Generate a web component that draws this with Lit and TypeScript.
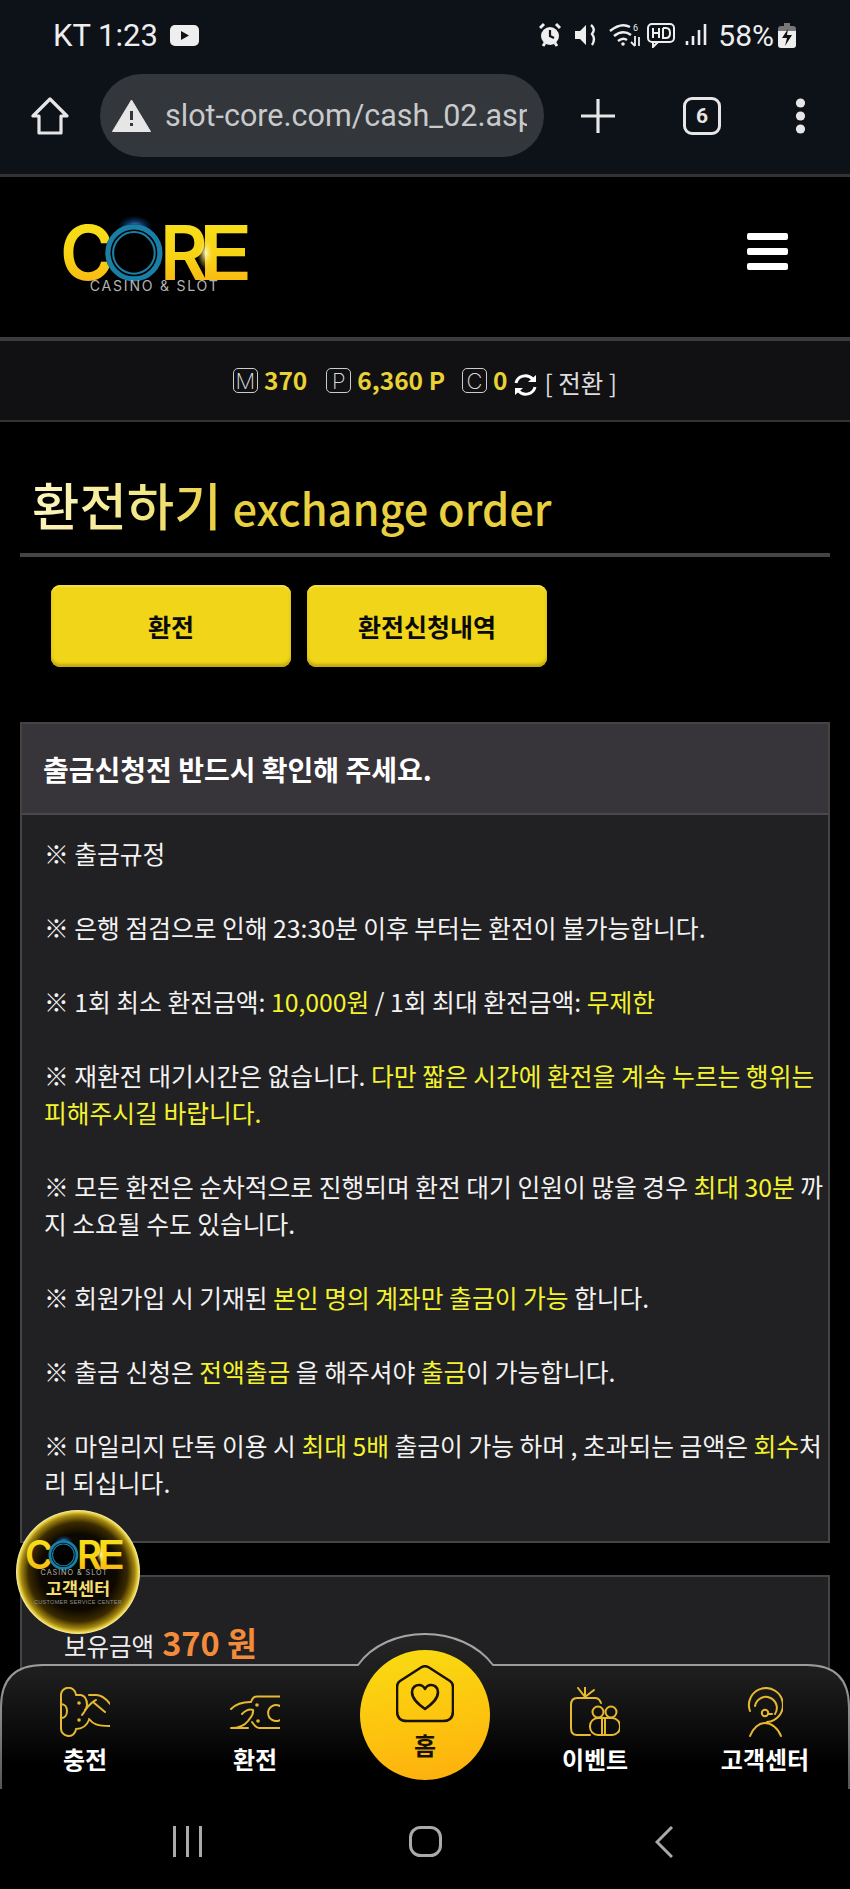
import { LitElement, html, css, svg } from "lit";
import { customElement } from "lit/decorators.js";

const logo = (id: string, w: number) => html`<svg class="logo" width=${w} viewBox="0 -14 196 100">
  <defs>
    <linearGradient id="${id}g" x1="0" y1="0" x2="0" y2="1"><stop offset="0" stop-color="#f7e51c"/><stop offset=".55" stop-color="#f7d214"/><stop offset="1" stop-color="#fba913"/></linearGradient>
    <radialGradient id="${id}b"><stop offset="0" stop-color="#5aa8f5"/><stop offset=".5" stop-color="#124a88" stop-opacity=".7"/><stop offset="1" stop-color="#0a2a55" stop-opacity="0"/></radialGradient>
    <radialGradient id="${id}w"><stop offset="0" stop-color="#fff8c0"/><stop offset="1" stop-color="#f7d214" stop-opacity="0"/></radialGradient>
  </defs>
  <ellipse cx="72" cy="7" rx="17" ry="11" fill="url(#${id}b)"/>
  <text class="lg" x="0" y="58" font-size="72" textLength="52" lengthAdjust="spacingAndGlyphs" fill="url(#${id}g)">C</text>
  <text class="lg" x="96" y="58" font-size="72" textLength="46" lengthAdjust="spacingAndGlyphs" fill="url(#${id}g)">R</text>
  <text class="lg" x="133" y="58" font-size="72" textLength="52" lengthAdjust="spacingAndGlyphs" fill="url(#${id}g)">E</text>
  <circle cx="71" cy="32" r="27.5" fill="#000"/>
  <circle cx="71" cy="32" r="25" fill="none" stroke="#1a7fa6" stroke-width="5"/>
  <circle cx="71" cy="32" r="20" fill="none" stroke="#1a7fa6" stroke-width="2"/>
  <ellipse cx="140" cy="32" rx="8" ry="16" fill="url(#${id}w)"/>
  <text class="ls" x="91" y="69" text-anchor="middle" font-size="13.5" letter-spacing="1.7" fill="#b4b4b4">CASINO &amp; SLOT</text>
</svg>`;

const navIcons: Record<string, unknown> = {
  charge: html`<svg width="50" height="50" viewBox="0 0 50 50" class="ni">
    <path d="M1 9A7.5 7.5 0 0 1 16 7.5M1 9V41A7.5 7.5 0 0 0 16 42M16 8H21C26 9 27 13 27 18C27 23 24 25 22 28M16 42C23 42 27 38 29 33"/>
    <path d="M1 17C9 17 9 31 1 31M29 8H36C42 8 47 13 50 17M25 23C30 17 33 14 36 13M33 15L45 25M29 32C33 37 37 39 50 39"/>
    <circle class="d" cx="19" cy="16" r="1.8"/><circle class="d" cx="19" cy="33" r="1.8"/></svg>`,
  exchange: html`<svg width="50" height="50" viewBox="0 -8 50 50" class="ni">
    <path d="M50 1.5H27C24 1.5 22 4 21 7M1 14C6 9 11 7 20 7M12 19C16 15 20 14 23 15C24 20 20 23 18 26C15 30 10 33 1 33H18M50 33H29C26 33 24 30 22 27M50 11A8 8 0 1 0 50 25"/>
    <circle class="d" cx="27" cy="10" r="1.8"/><circle class="d" cx="28" cy="26" r="1.8"/></svg>`,
  event: html`<svg width="50" height="50" viewBox="0 0 50 50" class="ni">
    <path d="M15 10L8 1M15 10V0M15 10L24 3M31 16C30 13 28 11 25 11H7C3 11 1 14 1 18V41C1 45 3 48 7 48H20"/>
    <rect x="20" y="31" width="30" height="17" rx="8"/><path d="M32 31V48M35 31V48"/>
    <circle cx="28" cy="25" r="5.5"/><circle cx="41" cy="25" r="5.5"/></svg>`,
  support: html`<svg width="36" height="50" viewBox="0 0 36 50" class="ni">
    <path d="M3 24A17 17 0 1 1 20 35M8 19A11 11 0 1 1 28 27"/>
    <circle cx="18" cy="26" r="3.2"/><path d="M21 27H25M3 49C6 41 12 36 18 36C24 36 31 41 34 49"/></svg>`,
};

const navLeft = [{ i: "charge", l: "충전" }, { i: "exchange", l: "환전" }];
const navRight = [{ i: "event", l: "이벤트" }, { i: "support", l: "고객센터" }];

@customElement("app-root")
export class AppRoot extends LitElement {
  static styles = css`
    :host { display: block; width: 850px; height: 1889px; background: #000; position: relative; overflow: hidden; font-family: "Noto Sans CJK KR", "Noto Sans", sans-serif; color: #fff; }
    .page { display: flex; flex-direction: column; height: 1889px; }
    svg { display: block; flex: none; }
    .lg { font-family: Inter, sans-serif; font-weight: 600; }
    .ls { font-family: Inter, sans-serif; font-weight: 400; }
    .chrome { background: #0d1118; height: 174px; border-bottom: 3px solid #333; font-family: Roboto, sans-serif; flex: none; }
    .status { height: 74px; padding: 0 0 4px 53px; box-sizing: border-box; display: flex; align-items: center; font-size: 31px; color: #eee; }
    .yt { margin-left: 12px; }
    .st-right { margin-left: auto; display: flex; align-items: center; padding-right: 54px; }
    .tiny { font-size: 9px; font-family: Roboto, sans-serif; fill: #eee; stroke: none; }
    .pct { margin: 0 4px 0 9px; font-size: 30px; }
    .toolbar { display: flex; align-items: center; height: 83px; padding-left: 31px; }
    .url { margin-left: 31px; width: 444px; height: 83px; border-radius: 42px; background: #33363b; display: flex; align-items: center; padding: 0 16px 0 12px; box-sizing: border-box; }
    .url-text { margin-left: 14px; width: 362px; overflow: hidden; white-space: nowrap; font-size: 30.5px; color: #c8cacc; }
    .plus { margin-left: 37px; }
    .tab { margin-left: 68px; width: 38px; height: 38px; box-sizing: border-box; border: 3px solid #e6e6e6; border-radius: 9px; display: flex; align-items: center; justify-content: center; font-size: 21px; font-weight: 700; color: #e6e6e6; }
    .dots { margin-left: 74px; }
    .header { height: 164px; box-sizing: border-box; background: #000; display: flex; align-items: center; padding: 0 62px 0 60px; justify-content: space-between; border-bottom: 4px solid #3c3c3c; flex: none; }
    .logo-wrap { margin-top: 1px; }
    .burger { display: flex; flex-direction: column; gap: 8px; margin-top: -11px; }
    .burger i { display: block; width: 41px; height: 7px; border-radius: 2px; background: #fff; }
    .points { height: 79px; background: #111114; border-bottom: 2px solid #333; display: flex; align-items: center; justify-content: center; flex: none; box-sizing: content-box; }
    .pi { width: 25px; height: 25px; box-sizing: border-box; border: 1.5px solid #ccc; border-radius: 5px; display: flex; align-items: center; justify-content: center; font-family: Inter, sans-serif; font-weight: 200; font-size: 22px; color: #ddd; }
    .pv { margin-left: 6px; font-size: 24.5px; font-weight: 700; color: #e9d233; line-height: 1; }
    .pg { margin-left: 19px; }
    .pc { margin-left: 17px; }
    .swap { margin-left: 7px; margin-top: 8px; }
    .sw-t { margin-left: 7px; font-size: 24.5px; color: #ddd; margin-top: 6px; line-height: 1; }
    .title { flex: none; margin: 0 20px; padding: 46px 0 0 12px; height: 135px; box-sizing: border-box; border-bottom: 4px solid #444; display: flex; align-items: baseline; line-height: 72px; }
    .t-ko { font-size: 51.5px; font-weight: 500; background: linear-gradient(100deg, #fff6c4 0%, #f3e88a 55%, #e9cd3a 100%); -webkit-background-clip: text; background-clip: text; color: transparent; }
    .t-en { margin-left: 11px; font-size: 43.3px; font-weight: 500; color: #e8d040; }
    .tabs { flex: none; display: flex; gap: 16px; padding: 28px 0 0 51px; }
    .btn { width: 240px; height: 82px; border-radius: 9px; background: #f0d518; box-shadow: inset 0 -3px 3px #c2a812, inset 0 2px 2px #f6e14a; display: flex; align-items: center; justify-content: center; color: #0a0a0a; font-size: 25px; font-weight: 700; }
    .panel { margin: 55px 20px 0; border: 2px solid #444; background: #212023; flex: none; box-sizing: border-box; }
    .p-head { background: #37343a; border-bottom: 2px solid #4a484c; display: flex; align-items: center; padding-left: 21px; font-size: 28px; font-weight: 700; box-sizing: border-box; height: 91px; }
    .p-body { padding: 20px 2px 3px 22px; font-size: 24.75px; line-height: 37px; color: #f2f2f2; box-sizing: border-box; }
    .p-body p { margin: 0 0 37px; }
    .p-body b { font-weight: 400; color: #f3f32e; }
    .panel2 { margin-top: 32px; flex: 1; min-height: 0; border-bottom: 0; padding: 44px 0 0 42px; display: flex; align-items: baseline; font-size: 24.5px; color: #eee; overflow: hidden; line-height: 42px; }
    .bal { margin-left: 8px; font-size: 32.5px; font-weight: 700; color: #f28c3a; }
    .sys { height: 100px; flex: none; background: #000; display: flex; align-items: flex-start; padding: 37px 0 0 173px; box-sizing: border-box; position: relative; z-index: 3; }
    .sys-h { margin-left: 207px; }
    .sys-b { margin-left: 213px; }
    .nav { position: absolute; left: 0; bottom: 100px; width: 850px; height: 156px; z-index: 2; }
    .nav-bg { position: absolute; inset: 0; }
    .nav-grid { position: relative; display: grid; grid-template-columns: repeat(5, 170px); padding-top: 17px; }
    .item { display: flex; flex-direction: column; align-items: center; padding-top: 37px; font-size: 24px; font-weight: 700; line-height: 30px; }
    .item span { margin-top: 7px; }
    .ni { fill: none; stroke: #e6b92e; stroke-width: 2; stroke-linecap: round; stroke-linejoin: round; }
    .ni .d { fill: #e6b92e; stroke: none; }
    .home { width: 130px; height: 130px; border-radius: 50%; justify-self: center; background: linear-gradient(170deg, #f8dc12 0%, #fdc40e 55%, #fdae0e 100%); display: flex; flex-direction: column; align-items: center; padding-top: 15px; box-sizing: border-box; color: #1a1200; font-size: 24px; font-weight: 700; line-height: 30px; }
    .home span { margin-top: 7px; }
    .badge { position: absolute; left: 16px; top: 1510px; width: 124px; height: 124px; border-radius: 50%; z-index: 1; box-sizing: border-box; background: radial-gradient(circle closest-side, #060400 0%, #0e0900 62%, #3a2a00 80%, #a88a10 92%, #e8d24a 97%, #fbf3b0 100%); display: flex; flex-direction: column; align-items: center; padding-top: 20px; }
    .b-ko { font-size: 17.5px; font-weight: 700; line-height: 20px; margin-top: -6px; color: #f3df72; }
    .b-en { font-size: 5.5px; line-height: 9px; color: #8f8f8f; font-family: "Liberation Sans", sans-serif; letter-spacing: .3px; white-space: nowrap; }
  `;

  render() {
    return html`<div class="page">
      <div class="chrome">
        <div class="status">
          <span>KT 1:23</span>
          <svg class="yt" width="29" height="21" viewBox="0 0 29 21"><rect width="29" height="21" rx="5" fill="#eee"/><path d="M11 6L19 10.5L11 15Z" fill="#111"/></svg>
          <div class="st-right">
            <svg width="170" height="26" viewBox="0 0 170 26" fill="none" stroke="#eee">
              <circle cx="11" cy="14" r="9" fill="#eee" stroke="none"/><path d="M11 8V14L15 16" stroke="#0d1118" stroke-width="2.2"/><path d="M1 6L5 2M21 6L17 2M4 24L6 21M18 24L16 21" stroke-width="3"/>
              <path d="M36 9H41L47 3V23L41 17H36Z" fill="#eee" stroke="none"/><path d="M52 3Q57 7 53 12Q57 17 53 23" stroke-width="2.4"/>
              <path d="M71 9Q82 0 91 5M75 14Q84 7 92 13M79 19Q84 15 88 18" stroke-width="2.4"/><circle cx="84" cy="22" r="1.8" fill="#eee" stroke="none"/><text class="tiny" x="94" y="9">6</text><path d="M96 14V24M92 20L96 24M100 24V15" stroke-width="1.8"/>
              <rect x="109" y="2" width="26" height="18" rx="4" stroke-width="2"/><path d="M114 20V25L119 20" stroke-width="2"/><path d="M114 6V16M114 11H120M120 6V16M124 6V16H127Q131 16 131 11Q131 6 127 6H124" stroke-width="2"/>
              <path d="M148 19V23M154 14V23M160 8V23M166 2V23" stroke-width="2.6"/>
            </svg>
            <span class="pct">58%</span>
            <svg width="18" height="25" viewBox="0 0 18 25"><path d="M6 0H12V3H15Q18 3 18 6V8H0V6Q0 3 3 3H6Z" fill="#777"/><path d="M0 8H18V22Q18 25 15 25H3Q0 25 0 22Z" fill="#eee"/><path d="M10 6L4 15H9L7 23L14 12H9Z" fill="#111"/></svg>
          </div>
        </div>
        <div class="toolbar">
          <svg width="38" height="38" viewBox="0 0 38 38" fill="none" stroke="#e6e6e6" stroke-width="3.2" stroke-linejoin="round"><path d="M19 2L2 19H8V36H30V19H36Z"/></svg>
          <div class="url">
            <svg width="39" height="33" viewBox="0 0 39 33"><path d="M19.5 1L38.5 32.5H.5Z" fill="#e6e6e6" stroke="#e6e6e6" stroke-linejoin="round"/><path d="M18 12H21V21H18ZM18 24H21V27H18Z" fill="#33363b"/></svg>
            <div class="url-text">slot-core.com/cash_02.asp</div>
          </div>
          <svg class="plus" width="34" height="34" viewBox="0 0 34 34" stroke="#e6e6e6" stroke-width="3.2"><path d="M17 0V34M0 17H34"/></svg>
          <div class="tab">6</div>
          <svg class="dots" width="11" height="36" viewBox="0 0 11 36" fill="#e6e6e6"><circle cx="5.5" cy="5" r="4.6"/><circle cx="5.5" cy="18" r="4.6"/><circle cx="5.5" cy="31" r="4.6"/></svg>
        </div>
      </div>

      <div class="header">
        <div class="logo-wrap">${logo("a", 204)}</div>
        <div class="burger"><i></i><i></i><i></i></div>
      </div>

      <div class="points">
        <span class="pi">M</span><span class="pv">370</span>
        <span class="pi pg">P</span><span class="pv">6,360 P</span>
        <span class="pi pc">C</span><span class="pv">0</span>
        <svg class="swap" width="23" height="22" viewBox="0 0 23 22" fill="none" stroke="#fff" stroke-width="3"><path d="M2 9A9.5 9 0 0 1 18.5 5"/><path d="M21 13A9.5 9 0 0 1 4.5 17"/><path d="M14 8H22V1Z" fill="#fff" stroke="none"/><path d="M9 14H1V21Z" fill="#fff" stroke="none"/></svg>
        <span class="sw-t">[ 전환 ]</span>
      </div>

      <div class="title"><span class="t-ko">환전하기</span><span class="t-en">exchange order</span></div>

      <div class="tabs"><div class="btn">환전</div><div class="btn">환전신청내역</div></div>

      <div class="panel">
        <div class="p-head">출금신청전 반드시 확인해 주세요.</div>
        <div class="p-body">
          <p>※ 출금규정</p>
          <p>※ 은행 점검으로 인해 23:30분 이후 부터는 환전이 불가능합니다.</p>
          <p>※ 1회 최소 환전금액: <b>10,000원</b> / 1회 최대 환전금액: <b>무제한</b></p>
          <p>※ 재환전 대기시간은 없습니다. <b>다만 짧은 시간에 환전을 계속 누르는 행위는 피해주시길 바랍니다.</b></p>
          <p>※ 모든 환전은 순차적으로 진행되며 환전 대기 인원이 많을 경우 <b>최대 30분</b> 까지 소요될 수도 있습니다.</p>
          <p>※ 회원가입 시 기재된 <b>본인 명의 계좌만 출금이 가능</b> 합니다.</p>
          <p>※ 출금 신청은 <b>전액출금</b> 을 해주셔야 <b>출금</b>이 가능합니다.</p>
          <p>※ 마일리지 단독 이용 시 <b>최대 5배</b> 출금이 가능 하며 , 초과되는 금액은 <b>회수</b>처리 되십니다.</p>
        </div>
      </div>

      <div class="panel panel2"><span>보유금액</span><span class="bal">370 원</span></div>

      <div class="sys">
        <svg width="29" height="31" viewBox="0 0 29 31" stroke="#aaa" stroke-width="3"><path d="M1.5 0V31M14.5 0V31M27.5 0V31"/></svg>
        <svg class="sys-h" width="33" height="31" viewBox="0 0 33 31" fill="none" stroke="#aaa" stroke-width="3"><rect x="1.5" y="1.5" width="30" height="28" rx="10"/></svg>
        <svg class="sys-b" width="18" height="32" viewBox="0 0 18 32" fill="none" stroke="#aaa" stroke-width="3"><path d="M17 1L2 16L17 31"/></svg>
      </div>
    </div>

    <div class="badge">
      ${logo("b", 106)}
      <div class="b-ko">고객센터</div>
      <div class="b-en">CUSTOMER SERVICE CENTER</div>
    </div>

    <div class="nav">
      <svg class="nav-bg" width="850" height="156" viewBox="0 0 850 156">
        <defs>
          <linearGradient id="nf" x1="0" y1="0" x2="0" y2="1"><stop offset="0" stop-color="#252525"/><stop offset=".3" stop-color="#1c1c1c"/><stop offset=".85" stop-color="#000"/></linearGradient>
          <linearGradient id="ns" x1="0" y1="0" x2="0" y2="1"><stop offset="0" stop-color="#a8a8a8"/><stop offset=".5" stop-color="#8a8a8a"/><stop offset="1" stop-color="#555"/></linearGradient>
        </defs>
        ${svg`<path d="M1 156V74Q1 32 43 32H358C372 12 398 1 425 1C452 1 478 12 493 32H807Q849 32 849 74V156Z" fill="url(#nf)"/>
        <path d="M1 156V74Q1 32 43 32H358C372 12 398 1 425 1C452 1 478 12 493 32H807Q849 32 849 74V156" fill="none" stroke="url(#ns)" stroke-width="2"/>`}
      </svg>
      <div class="nav-grid">
        ${navLeft.map((n) => html`<div class="item">${navIcons[n.i]}<span>${n.l}</span></div>`)}
        <div class="home">
          <svg width="58" height="58" viewBox="0 0 58 58" fill="none" stroke="#1a1200" stroke-width="2.6" stroke-linejoin="round"><path d="M4 16L25 2.5Q29 0 33 2.5L54 16Q57 18 57 22V46Q57 56 47 56H11Q1 56 1 46V22Q1 18 4 16Z"/><path d="M29 44C22 39 16 34 16 27C16 22 20 20 23 20C26 20 28 22 29 24C30 22 32 20 35 20C38 20 42 22 42 27C42 34 36 39 29 44Z"/></svg>
          <span>홈</span>
        </div>
        ${navRight.map((n) => html`<div class="item">${navIcons[n.i]}<span>${n.l}</span></div>`)}
      </div>
    </div>`;
  }
}
